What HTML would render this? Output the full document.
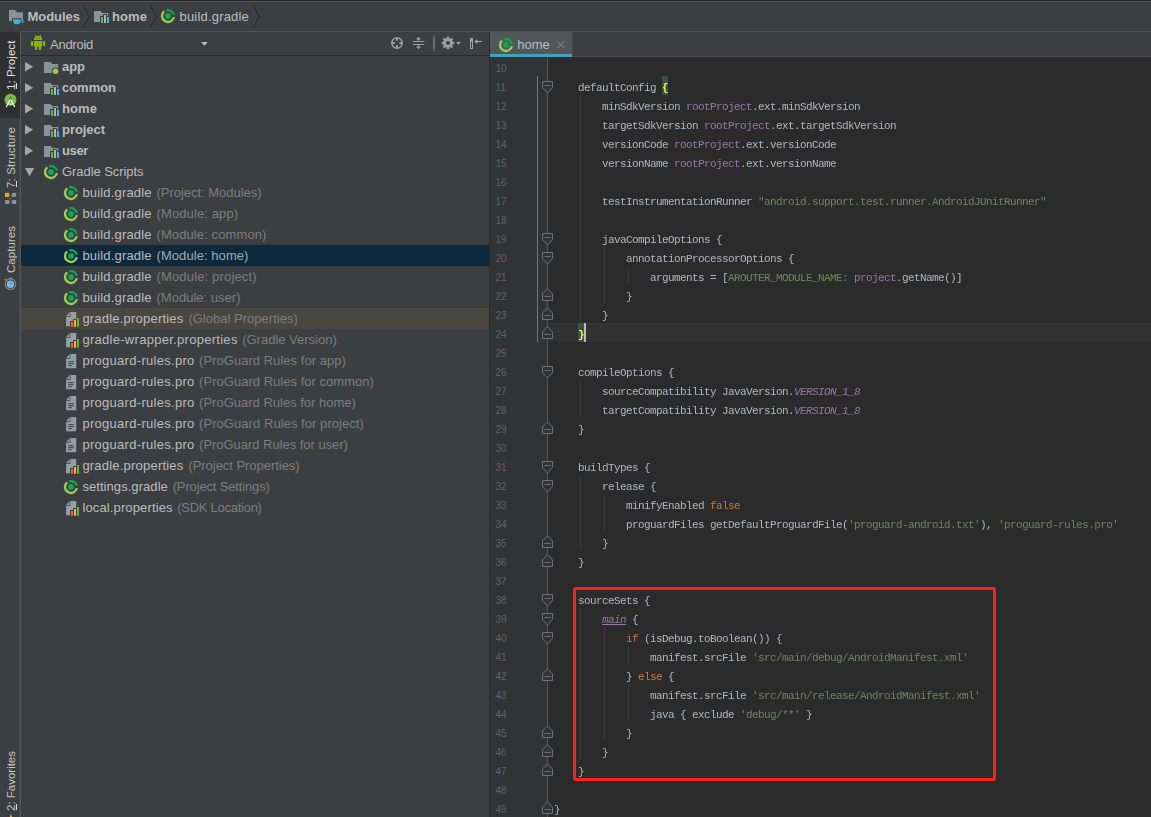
<!DOCTYPE html><html><head><meta charset="utf-8"><title>Modules - build.gradle</title><style>
*{box-sizing:border-box;margin:0;padding:0}
html,body{width:1151px;height:817px;overflow:hidden;background:#3c3f41}
body{position:relative;font-family:"Liberation Sans", "Noto Sans CJK SC", sans-serif;font-size:13px;color:#bbbbbb}
.abs{position:absolute}
svg{position:absolute;overflow:visible}
.t{position:absolute;white-space:pre;line-height:21px;height:21px;font-size:13px;color:#bbbbbb}
.g{color:#7d7d7d}
.b{font-weight:bold}
#crumbs{left:0;top:0;width:1151px;height:31px;background:#3c3f41;border-top:1px solid #242424}
#crumbs3{left:20px;top:31px;width:1131px;height:1px;background:#555555}
#crumbs2{left:0;top:1px;width:1151px;height:1px;background:#555555}
#stripe{left:0;top:32px;width:21px;height:785px;background:#3c3f41;border-right:1px solid #555555}
#stripe2{left:19px;top:118px;width:1px;height:699px;background:#484848}
#stripeSel{left:0;top:31px;width:20px;height:87px;background:linear-gradient(180deg,#404142 0,#2d2f30 2px)}
.vt{position:absolute;white-space:pre;font-size:11.5px;line-height:14px;height:14px;transform-origin:0 0;transform:rotate(-90deg);color:#bbbbbb}
#phead{left:21px;top:32px;width:468px;height:24px;background:#3c3f41;border-bottom:1px solid #2b2b2b}
#tree{left:21px;top:56px;width:468px;height:761px;background:#3c3f41}
.row{position:absolute;left:21px;width:468px;height:21px}
#tabs{left:489px;top:32px;width:662px;height:25px;background:#3c3f41;border-bottom:1px solid #4e4e4e;border-left:1px solid #2b2b2b}
#tabsep{left:572px;top:32px;width:1px;height:25px;background:#4a4a4a}
#tab{left:490px;top:32px;width:82px;height:25px;background:#515658;border-bottom:3px solid #439ec0}
#gutter{left:489px;top:57px;width:59px;height:760px;background:#313335;border-left:1px solid #2b2b2b}
#editor{left:548px;top:57px;width:603px;height:760px;background:#2b2b2b}
.ln{position:absolute;left:495.5px;font-size:10px;line-height:19px;height:19px;color:#606366;white-space:pre}
.cl{will-change:transform;position:absolute;left:554px;font-family:"Liberation Mono", "Noto Sans CJK SC", monospace;font-size:11px;letter-spacing:-0.6px;line-height:19px;height:19px;color:#a9b7c6;white-space:pre}
.k{color:#cc7832}.s{color:#6a8759}.p{color:#9876aa}.pi{color:#9876aa;font-style:italic}
.u{text-decoration:underline}
.bm{color:#ffef28;font-weight:bold}
.ig{position:absolute;width:1px;background:#3a3a3a}
</style></head><body>
<div class="abs" id="crumbs"></div><div class="abs" id="crumbs2"></div><div class="abs" id="crumbs3"></div>
<svg style="left:8px;top:8px" width="16" height="16"><path d="M1 2.1H6.8L8.8 4.2H15V13H1Z" fill="#87939a"/><path d="M4 10.2H13.6V12H16.6V16.5H4Z" fill="#3c3f41"/><path d="M5 11.3H12.6Q12.6 16.2 10 16.2H7.6Q5 16.2 5 11.3Z" fill="#3bb2dd"/><ellipse cx="14" cy="13.4" rx="1.75" ry="1.05" fill="none" stroke="#3bb2dd" stroke-width="0.9"/></svg>
<span class="t b" style="left:27.5px;top:5.5px;letter-spacing:-0.033px;">Modules</span>
<svg style="left:81.8px;top:5px" width="9" height="24"><path d="M-0.5 0.3L5.7 11.5L-0.5 22.7" fill="none" stroke="#4a4c4e" stroke-width="1"/><path d="M0.7 0.3L6.9 11.5L0.7 22.7" fill="none" stroke="#2b2b2b" stroke-width="1.1"/></svg>
<svg style="left:93px;top:8px" width="16" height="16" viewBox="0 0 16 16"><path d="M1 3.1H7.4L9.3 5.1H15.2V14H1Z" fill="#87939a"/><path d="M7 15V8H10V6H14V8H17V15Z" fill="#3c3f41"/><rect x="8" y="9" width="2" height="6" fill="#62b543"/><rect x="11" y="7" width="2" height="8" fill="#aab4ba"/><rect x="14" y="9" width="2" height="6" fill="#40b6e0"/></svg>
<span class="t b" style="left:112px;top:5.5px;letter-spacing:0.082px;">home</span>
<svg style="left:149.2px;top:5px" width="9" height="24"><path d="M-0.5 0.3L5.7 11.5L-0.5 22.7" fill="none" stroke="#4a4c4e" stroke-width="1"/><path d="M0.7 0.3L6.9 11.5L0.7 22.7" fill="none" stroke="#2b2b2b" stroke-width="1.1"/></svg>
<svg style="left:160px;top:8px" width="16" height="16" viewBox="0 0 16 16"><circle cx="8" cy="8" r="2.9" fill="#12a655"/><path d="M6.26 2.31A5.95 5.95 0 0 1 13.82 6.76" fill="none" stroke="#12a655" stroke-width="2.3"/><path d="M13.84 9.14A5.95 5.95 0 1 1 4.26 3.38" fill="none" stroke="#9acd53" stroke-width="2.3"/></svg>
<span class="t" style="left:179.5px;top:5.5px;letter-spacing:0.190px;">build.gradle</span>
<svg style="left:251.5px;top:5px" width="9" height="24"><path d="M-0.5 0.3L5.7 11.5L-0.5 22.7" fill="none" stroke="#4a4c4e" stroke-width="1"/><path d="M0.7 0.3L6.9 11.5L0.7 22.7" fill="none" stroke="#2b2b2b" stroke-width="1.1"/></svg>
<div class="abs" id="stripe"></div><div class="abs" id="stripeSel"></div><div class="abs" id="stripe2"></div>
<span class="vt" style="left:4px;top:90px;letter-spacing:0.092px;color:#e2e2e2">1: Project</span>
<span class="vt" style="left:4px;top:188px;letter-spacing:0.129px;color:#c4c4c4">7: Structure</span>
<span class="vt" style="left:4px;top:273px;letter-spacing:0.041px;color:#c4c4c4">Captures</span>
<span class="vt" style="left:4px;top:810.5px;letter-spacing:-0.007px;color:#c4c4c4">2: Favorites</span>
<div class="abs" id="phead"></div><div class="abs" id="tree"></div>
<span class="t" style="left:50px;top:33.5px;letter-spacing:-0.259px;">Android</span>
<svg style="left:25px;top:62px" width="9" height="10"><path d="M0 0L8.2 4.7L0 9.4Z" fill="#a6a6a6"/></svg>
<svg style="left:43px;top:58.5px" width="16" height="16" viewBox="0 0 16 16"><path d="M1 3.1H7.4L9.3 5.1H15.2V14H1Z" fill="#87939a"/><circle cx="12.5" cy="12.3" r="3.7" fill="#3c3f41"/><circle cx="12.5" cy="12.3" r="2.8" fill="#a4c639"/></svg>
<span class="t b" style="left:62px;top:56px;letter-spacing:-0.042px;">app</span>
<svg style="left:25px;top:83px" width="9" height="10"><path d="M0 0L8.2 4.7L0 9.4Z" fill="#a6a6a6"/></svg>
<svg style="left:43px;top:79.5px" width="16" height="16" viewBox="0 0 16 16"><path d="M1 3.1H7.4L9.3 5.1H15.2V14H1Z" fill="#87939a"/><path d="M7 15V8H10V6H14V8H17V15Z" fill="#3c3f41"/><rect x="8" y="9" width="2" height="6" fill="#62b543"/><rect x="11" y="7" width="2" height="8" fill="#aab4ba"/><rect x="14" y="9" width="2" height="6" fill="#40b6e0"/></svg>
<span class="t b" style="left:62px;top:77px;letter-spacing:-0.029px;">common</span>
<svg style="left:25px;top:104px" width="9" height="10"><path d="M0 0L8.2 4.7L0 9.4Z" fill="#a6a6a6"/></svg>
<svg style="left:43px;top:100.5px" width="16" height="16" viewBox="0 0 16 16"><path d="M1 3.1H7.4L9.3 5.1H15.2V14H1Z" fill="#87939a"/><path d="M7 15V8H10V6H14V8H17V15Z" fill="#3c3f41"/><rect x="8" y="9" width="2" height="6" fill="#62b543"/><rect x="11" y="7" width="2" height="8" fill="#aab4ba"/><rect x="14" y="9" width="2" height="6" fill="#40b6e0"/></svg>
<span class="t b" style="left:62px;top:98px;letter-spacing:0.082px;">home</span>
<svg style="left:25px;top:125px" width="9" height="10"><path d="M0 0L8.2 4.7L0 9.4Z" fill="#a6a6a6"/></svg>
<svg style="left:43px;top:121.5px" width="16" height="16" viewBox="0 0 16 16"><path d="M1 3.1H7.4L9.3 5.1H15.2V14H1Z" fill="#87939a"/><path d="M7 15V8H10V6H14V8H17V15Z" fill="#3c3f41"/><rect x="8" y="9" width="2" height="6" fill="#62b543"/><rect x="11" y="7" width="2" height="8" fill="#aab4ba"/><rect x="14" y="9" width="2" height="6" fill="#40b6e0"/></svg>
<span class="t b" style="left:62px;top:119px;letter-spacing:-0.049px;">project</span>
<svg style="left:25px;top:146px" width="9" height="10"><path d="M0 0L8.2 4.7L0 9.4Z" fill="#a6a6a6"/></svg>
<svg style="left:43px;top:142.5px" width="16" height="16" viewBox="0 0 16 16"><path d="M1 3.1H7.4L9.3 5.1H15.2V14H1Z" fill="#87939a"/><path d="M7 15V8H10V6H14V8H17V15Z" fill="#3c3f41"/><rect x="8" y="9" width="2" height="6" fill="#62b543"/><rect x="11" y="7" width="2" height="8" fill="#aab4ba"/><rect x="14" y="9" width="2" height="6" fill="#40b6e0"/></svg>
<span class="t b" style="left:62px;top:140px;letter-spacing:-0.367px;">user</span>
<svg style="left:24.5px;top:168px" width="10" height="9"><path d="M0 0H9.2L4.6 8.2Z" fill="#a6a6a6"/></svg>
<svg style="left:43px;top:163.5px" width="16" height="16" viewBox="0 0 16 16"><circle cx="8" cy="8" r="2.9" fill="#12a655"/><path d="M6.26 2.31A5.95 5.95 0 0 1 13.82 6.76" fill="none" stroke="#12a655" stroke-width="2.3"/><path d="M13.84 9.14A5.95 5.95 0 1 1 4.26 3.38" fill="none" stroke="#9acd53" stroke-width="2.3"/></svg>
<span class="t" style="left:62px;top:161px;letter-spacing:-0.062px;">Gradle Scripts</span>
<svg style="left:63px;top:184.5px" width="16" height="16" viewBox="0 0 16 16"><circle cx="8" cy="8" r="2.9" fill="#12a655"/><path d="M6.26 2.31A5.95 5.95 0 0 1 13.82 6.76" fill="none" stroke="#12a655" stroke-width="2.3"/><path d="M13.84 9.14A5.95 5.95 0 1 1 4.26 3.38" fill="none" stroke="#9acd53" stroke-width="2.3"/></svg>
<span class="t" style="left:82.4px;top:182px;letter-spacing:0.178px;">build.gradle</span>
<span class="t g" style="left:156.5px;top:182px;letter-spacing:-0.027px;">(Project: Modules)</span>
<svg style="left:63px;top:205.5px" width="16" height="16" viewBox="0 0 16 16"><circle cx="8" cy="8" r="2.9" fill="#12a655"/><path d="M6.26 2.31A5.95 5.95 0 0 1 13.82 6.76" fill="none" stroke="#12a655" stroke-width="2.3"/><path d="M13.84 9.14A5.95 5.95 0 1 1 4.26 3.38" fill="none" stroke="#9acd53" stroke-width="2.3"/></svg>
<span class="t" style="left:82.4px;top:203px;letter-spacing:0.178px;">build.gradle</span>
<span class="t g" style="left:156.5px;top:203px;letter-spacing:0.114px;">(Module: app)</span>
<svg style="left:63px;top:226.5px" width="16" height="16" viewBox="0 0 16 16"><circle cx="8" cy="8" r="2.9" fill="#12a655"/><path d="M6.26 2.31A5.95 5.95 0 0 1 13.82 6.76" fill="none" stroke="#12a655" stroke-width="2.3"/><path d="M13.84 9.14A5.95 5.95 0 1 1 4.26 3.38" fill="none" stroke="#9acd53" stroke-width="2.3"/></svg>
<span class="t" style="left:82.4px;top:224px;letter-spacing:0.178px;">build.gradle</span>
<span class="t g" style="left:156.5px;top:224px;letter-spacing:0.102px;">(Module: common)</span>
<div class="row" style="top:245px;background:#0d293e"></div>
<svg style="left:63px;top:247.5px" width="16" height="16" viewBox="0 0 16 16"><circle cx="8" cy="8" r="2.9" fill="#12a655"/><path d="M6.26 2.31A5.95 5.95 0 0 1 13.82 6.76" fill="none" stroke="#12a655" stroke-width="2.3"/><path d="M13.84 9.14A5.95 5.95 0 1 1 4.26 3.38" fill="none" stroke="#9acd53" stroke-width="2.3"/></svg>
<span class="t" style="left:82.4px;top:245px;letter-spacing:0.178px;">build.gradle</span>
<span class="t g" style="left:156.5px;top:245px;letter-spacing:0.068px;color:#a3a7aa;">(Module: home)</span>
<svg style="left:63px;top:268.5px" width="16" height="16" viewBox="0 0 16 16"><circle cx="8" cy="8" r="2.9" fill="#12a655"/><path d="M6.26 2.31A5.95 5.95 0 0 1 13.82 6.76" fill="none" stroke="#12a655" stroke-width="2.3"/><path d="M13.84 9.14A5.95 5.95 0 1 1 4.26 3.38" fill="none" stroke="#9acd53" stroke-width="2.3"/></svg>
<span class="t" style="left:82.4px;top:266px;letter-spacing:0.178px;">build.gradle</span>
<span class="t g" style="left:156.5px;top:266px;letter-spacing:0.159px;">(Module: project)</span>
<svg style="left:63px;top:289.5px" width="16" height="16" viewBox="0 0 16 16"><circle cx="8" cy="8" r="2.9" fill="#12a655"/><path d="M6.26 2.31A5.95 5.95 0 0 1 13.82 6.76" fill="none" stroke="#12a655" stroke-width="2.3"/><path d="M13.84 9.14A5.95 5.95 0 1 1 4.26 3.38" fill="none" stroke="#9acd53" stroke-width="2.3"/></svg>
<span class="t" style="left:82.4px;top:287px;letter-spacing:0.178px;">build.gradle</span>
<span class="t g" style="left:156.5px;top:287px;letter-spacing:0.013px;">(Module: user)</span>
<div class="row" style="top:308px;background:#4a4741"></div>
<svg style="left:65px;top:311px" width="16" height="16" viewBox="0 0 16 16"><path d="M1.1 5.3L4.7 1.1V5.3Z" fill="#939fa7"/><path d="M5.4 1H11.2V8H8V10H5V15.2H1.1V6H5.4Z" fill="#939fa7"/><rect x="6" y="11" width="2" height="4.8" fill="#f26522"/><rect x="9" y="9" width="2" height="6.8" fill="#fbb03b"/><rect x="12" y="7" width="2" height="8.8" fill="#62b543"/></svg>
<span class="t" style="left:82.4px;top:308px;letter-spacing:0.208px;">gradle.properties</span>
<span class="t g" style="left:188.4px;top:308px;letter-spacing:0.015px;">(Global Properties)</span>
<svg style="left:65px;top:332px" width="16" height="16" viewBox="0 0 16 16"><path d="M1.1 5.3L4.7 1.1V5.3Z" fill="#939fa7"/><path d="M5.4 1H11.2V8H8V10H5V15.2H1.1V6H5.4Z" fill="#939fa7"/><rect x="6" y="11" width="2" height="4.8" fill="#f26522"/><rect x="9" y="9" width="2" height="6.8" fill="#fbb03b"/><rect x="12" y="7" width="2" height="8.8" fill="#62b543"/></svg>
<span class="t" style="left:82.4px;top:329px;letter-spacing:0.286px;">gradle-wrapper.properties</span>
<span class="t g" style="left:242.2px;top:329px;letter-spacing:-0.004px;">(Gradle Version)</span>
<svg style="left:65px;top:353px" width="16" height="16" viewBox="0 0 16 16"><path d="M1.1 5.3L4.7 1.1V5.3Z" fill="#939fa7"/><path d="M5.4 1H11.2V15.2H1.1V6H5.4Z" fill="#939fa7"/><path d="M3.2 8.7H8.9M3.2 10.7H8.9M3.2 12.7H6.8" stroke="#3c3f41" stroke-width="1" fill="none"/></svg>
<span class="t" style="left:82.4px;top:350px;letter-spacing:0.291px;">proguard-rules.pro</span>
<span class="t g" style="left:199.1px;top:350px;letter-spacing:0.031px;">(ProGuard Rules for app)</span>
<svg style="left:65px;top:374px" width="16" height="16" viewBox="0 0 16 16"><path d="M1.1 5.3L4.7 1.1V5.3Z" fill="#939fa7"/><path d="M5.4 1H11.2V15.2H1.1V6H5.4Z" fill="#939fa7"/><path d="M3.2 8.7H8.9M3.2 10.7H8.9M3.2 12.7H6.8" stroke="#3c3f41" stroke-width="1" fill="none"/></svg>
<span class="t" style="left:82.4px;top:371px;letter-spacing:0.291px;">proguard-rules.pro</span>
<span class="t g" style="left:199.1px;top:371px;letter-spacing:0.025px;">(ProGuard Rules for common)</span>
<svg style="left:65px;top:395px" width="16" height="16" viewBox="0 0 16 16"><path d="M1.1 5.3L4.7 1.1V5.3Z" fill="#939fa7"/><path d="M5.4 1H11.2V15.2H1.1V6H5.4Z" fill="#939fa7"/><path d="M3.2 8.7H8.9M3.2 10.7H8.9M3.2 12.7H6.8" stroke="#3c3f41" stroke-width="1" fill="none"/></svg>
<span class="t" style="left:82.4px;top:392px;letter-spacing:0.291px;">proguard-rules.pro</span>
<span class="t g" style="left:199.1px;top:392px;letter-spacing:0.001px;">(ProGuard Rules for home)</span>
<svg style="left:65px;top:416px" width="16" height="16" viewBox="0 0 16 16"><path d="M1.1 5.3L4.7 1.1V5.3Z" fill="#939fa7"/><path d="M5.4 1H11.2V15.2H1.1V6H5.4Z" fill="#939fa7"/><path d="M3.2 8.7H8.9M3.2 10.7H8.9M3.2 12.7H6.8" stroke="#3c3f41" stroke-width="1" fill="none"/></svg>
<span class="t" style="left:82.4px;top:413px;letter-spacing:0.291px;">proguard-rules.pro</span>
<span class="t g" style="left:199.1px;top:413px;letter-spacing:0.054px;">(ProGuard Rules for project)</span>
<svg style="left:65px;top:437px" width="16" height="16" viewBox="0 0 16 16"><path d="M1.1 5.3L4.7 1.1V5.3Z" fill="#939fa7"/><path d="M5.4 1H11.2V15.2H1.1V6H5.4Z" fill="#939fa7"/><path d="M3.2 8.7H8.9M3.2 10.7H8.9M3.2 12.7H6.8" stroke="#3c3f41" stroke-width="1" fill="none"/></svg>
<span class="t" style="left:82.4px;top:434px;letter-spacing:0.291px;">proguard-rules.pro</span>
<span class="t g" style="left:199.1px;top:434px;letter-spacing:-0.031px;">(ProGuard Rules for user)</span>
<svg style="left:65px;top:458px" width="16" height="16" viewBox="0 0 16 16"><path d="M1.1 5.3L4.7 1.1V5.3Z" fill="#939fa7"/><path d="M5.4 1H11.2V8H8V10H5V15.2H1.1V6H5.4Z" fill="#939fa7"/><rect x="6" y="11" width="2" height="4.8" fill="#f26522"/><rect x="9" y="9" width="2" height="6.8" fill="#fbb03b"/><rect x="12" y="7" width="2" height="8.8" fill="#62b543"/></svg>
<span class="t" style="left:82.4px;top:455px;letter-spacing:0.208px;">gradle.properties</span>
<span class="t g" style="left:188.4px;top:455px;letter-spacing:-0.039px;">(Project Properties)</span>
<svg style="left:63px;top:478.5px" width="16" height="16" viewBox="0 0 16 16"><circle cx="8" cy="8" r="2.9" fill="#12a655"/><path d="M6.26 2.31A5.95 5.95 0 0 1 13.82 6.76" fill="none" stroke="#12a655" stroke-width="2.3"/><path d="M13.84 9.14A5.95 5.95 0 1 1 4.26 3.38" fill="none" stroke="#9acd53" stroke-width="2.3"/></svg>
<span class="t" style="left:82.4px;top:476px;letter-spacing:0.062px;">settings.gradle</span>
<span class="t g" style="left:172.7px;top:476px;letter-spacing:-0.150px;">(Project Settings)</span>
<svg style="left:65px;top:500px" width="16" height="16" viewBox="0 0 16 16"><path d="M1.1 5.3L4.7 1.1V5.3Z" fill="#939fa7"/><path d="M5.4 1H11.2V8H8V10H5V15.2H1.1V6H5.4Z" fill="#939fa7"/><rect x="6" y="11" width="2" height="4.8" fill="#f26522"/><rect x="9" y="9" width="2" height="6.8" fill="#fbb03b"/><rect x="12" y="7" width="2" height="8.8" fill="#62b543"/></svg>
<span class="t" style="left:82.4px;top:497px;letter-spacing:0.134px;">local.properties</span>
<span class="t g" style="left:177.2px;top:497px;letter-spacing:-0.261px;">(SDK Location)</span>
<div class="abs" id="tabs"></div><div class="abs" id="tab"></div><div class="abs" id="tabsep"></div>
<svg style="left:498px;top:37px" width="16" height="16" viewBox="0 0 16 16"><circle cx="8" cy="8" r="2.9" fill="#12a655"/><path d="M6.26 2.31A5.95 5.95 0 0 1 13.82 6.76" fill="none" stroke="#12a655" stroke-width="2.3"/><path d="M13.84 9.14A5.95 5.95 0 1 1 4.26 3.38" fill="none" stroke="#9acd53" stroke-width="2.3"/></svg>
<span class="t" style="left:517.3px;top:34px;letter-spacing:-0.008px;">home</span>
<svg style="left:557px;top:41px" width="8" height="8"><path d="M0.5 0.5L7 7M7 0.5L0.5 7" stroke="#8f9395" stroke-width="1" fill="none"/></svg>
<div class="abs" id="gutter"></div><div class="abs" id="editor"></div>
<div class="abs" style="left:548px;top:323px;width:603px;height:19px;background:#323232"></div>
<div class="abs" style="left:662px;top:76px;width:6px;height:19px;background:#3b514d"></div>
<div class="abs" style="left:578px;top:323px;width:6px;height:19px;background:#3b514d"></div>
<div class="abs" style="left:537px;top:76px;width:1px;height:266px;background:#4f8a83"></div>
<div class="abs" style="left:547px;top:57px;width:1px;height:760px;background:#555555"></div>
<div class="ig" style="left:580px;top:95px;height:228px"></div>
<div class="ig" style="left:580px;top:380px;height:38px"></div>
<div class="ig" style="left:580px;top:475px;height:76px"></div>
<div class="ig" style="left:580px;top:608px;height:152px"></div>
<div class="ig" style="left:604px;top:247px;height:57px"></div>
<div class="ig" style="left:604px;top:494px;height:38px"></div>
<div class="ig" style="left:604px;top:627px;height:114px"></div>
<div class="ig" style="left:628px;top:266px;height:19px"></div>
<div class="ig" style="left:628px;top:646px;height:19px"></div>
<div class="ig" style="left:628px;top:684px;height:38px"></div>
<span class="ln" style="top:59px">10</span>
<span class="ln" style="top:78px">11</span>
<span class="cl" style="top:79px">    defaultConfig <span class="bm">{</span></span>
<span class="ln" style="top:97px">12</span>
<span class="cl" style="top:98px">        minSdkVersion <span class="p">rootProject</span>.ext.minSdkVersion</span>
<span class="ln" style="top:116px">13</span>
<span class="cl" style="top:117px">        targetSdkVersion <span class="p">rootProject</span>.ext.targetSdkVersion</span>
<span class="ln" style="top:135px">14</span>
<span class="cl" style="top:136px">        versionCode <span class="p">rootProject</span>.ext.versionCode</span>
<span class="ln" style="top:154px">15</span>
<span class="cl" style="top:155px">        versionName <span class="p">rootProject</span>.ext.versionName</span>
<span class="ln" style="top:173px">16</span>
<span class="ln" style="top:192px">17</span>
<span class="cl" style="top:193px">        testInstrumentationRunner <span class="s">"android.support.test.runner.AndroidJUnitRunner"</span></span>
<span class="ln" style="top:211px">18</span>
<span class="ln" style="top:230px">19</span>
<span class="cl" style="top:231px">        javaCompileOptions {</span>
<span class="ln" style="top:249px">20</span>
<span class="cl" style="top:250px">            annotationProcessorOptions {</span>
<span class="ln" style="top:268px">21</span>
<span class="cl" style="top:269px">                arguments = [<span class="s">AROUTER_MODULE_NAME:</span> <span class="p">project</span>.getName()]</span>
<span class="ln" style="top:287px">22</span>
<span class="cl" style="top:288px">            }</span>
<span class="ln" style="top:306px">23</span>
<span class="cl" style="top:307px">        }</span>
<span class="ln" style="top:325px">24</span>
<span class="cl" style="top:326px">    <span class="bm">}</span></span>
<span class="ln" style="top:344px">25</span>
<span class="ln" style="top:363px">26</span>
<span class="cl" style="top:364px">    compileOptions {</span>
<span class="ln" style="top:382px">27</span>
<span class="cl" style="top:383px">        sourceCompatibility JavaVersion.<span class="pi">VERSION_1_8</span></span>
<span class="ln" style="top:401px">28</span>
<span class="cl" style="top:402px">        targetCompatibility JavaVersion.<span class="pi">VERSION_1_8</span></span>
<span class="ln" style="top:420px">29</span>
<span class="cl" style="top:421px">    }</span>
<span class="ln" style="top:439px">30</span>
<span class="ln" style="top:458px">31</span>
<span class="cl" style="top:459px">    buildTypes {</span>
<span class="ln" style="top:477px">32</span>
<span class="cl" style="top:478px">        release {</span>
<span class="ln" style="top:496px">33</span>
<span class="cl" style="top:497px">            minifyEnabled <span class="k">false</span></span>
<span class="ln" style="top:515px">34</span>
<span class="cl" style="top:516px">            proguardFiles getDefaultProguardFile(<span class="s">'proguard-android.txt'</span>), <span class="s">'proguard-rules.pro'</span></span>
<span class="ln" style="top:534px">35</span>
<span class="cl" style="top:535px">        }</span>
<span class="ln" style="top:553px">36</span>
<span class="cl" style="top:554px">    }</span>
<span class="ln" style="top:572px">37</span>
<span class="ln" style="top:591px">38</span>
<span class="cl" style="top:592px">    sourceSets {</span>
<span class="ln" style="top:610px">39</span>
<span class="cl" style="top:611px">        <span class="pi u">main</span> {</span>
<span class="ln" style="top:629px">40</span>
<span class="cl" style="top:630px">            <span class="k">if</span> (isDebug.toBoolean()) {</span>
<span class="ln" style="top:648px">41</span>
<span class="cl" style="top:649px">                manifest.srcFile <span class="s">'src/main/debug/AndroidManifest.xml'</span></span>
<span class="ln" style="top:667px">42</span>
<span class="cl" style="top:668px">            } <span class="k">else</span> {</span>
<span class="ln" style="top:686px">43</span>
<span class="cl" style="top:687px">                manifest.srcFile <span class="s">'src/main/release/AndroidManifest.xml'</span></span>
<span class="ln" style="top:705px">44</span>
<span class="cl" style="top:706px">                java { exclude <span class="s">'debug/**'</span> }</span>
<span class="ln" style="top:724px">45</span>
<span class="cl" style="top:725px">            }</span>
<span class="ln" style="top:743px">46</span>
<span class="cl" style="top:744px">        }</span>
<span class="ln" style="top:762px">47</span>
<span class="cl" style="top:763px">    }</span>
<span class="ln" style="top:781px">48</span>
<span class="ln" style="top:800px">49</span>
<span class="cl" style="top:801px">}</span>
<div class="abs" style="left:584px;top:323px;width:2px;height:19px;background:#bbbbbb"></div>
<svg style="left:542px;top:81px" width="11" height="13"><path d="M0.5 0.5H10.5V6.5L5.5 12L0.5 6.5Z" fill="#313335" stroke="#6e7173" stroke-width="1"/><path d="M2.5 4.5H8.5" stroke="#6e7173" stroke-width="1"/></svg>
<svg style="left:542px;top:233px" width="11" height="13"><path d="M0.5 0.5H10.5V6.5L5.5 12L0.5 6.5Z" fill="#313335" stroke="#6e7173" stroke-width="1"/><path d="M2.5 4.5H8.5" stroke="#6e7173" stroke-width="1"/></svg>
<svg style="left:542px;top:252px" width="11" height="13"><path d="M0.5 0.5H10.5V6.5L5.5 12L0.5 6.5Z" fill="#313335" stroke="#6e7173" stroke-width="1"/><path d="M2.5 4.5H8.5" stroke="#6e7173" stroke-width="1"/></svg>
<svg style="left:542px;top:366px" width="11" height="13"><path d="M0.5 0.5H10.5V6.5L5.5 12L0.5 6.5Z" fill="#313335" stroke="#6e7173" stroke-width="1"/><path d="M2.5 4.5H8.5" stroke="#6e7173" stroke-width="1"/></svg>
<svg style="left:542px;top:461px" width="11" height="13"><path d="M0.5 0.5H10.5V6.5L5.5 12L0.5 6.5Z" fill="#313335" stroke="#6e7173" stroke-width="1"/><path d="M2.5 4.5H8.5" stroke="#6e7173" stroke-width="1"/></svg>
<svg style="left:542px;top:480px" width="11" height="13"><path d="M0.5 0.5H10.5V6.5L5.5 12L0.5 6.5Z" fill="#313335" stroke="#6e7173" stroke-width="1"/><path d="M2.5 4.5H8.5" stroke="#6e7173" stroke-width="1"/></svg>
<svg style="left:542px;top:594px" width="11" height="13"><path d="M0.5 0.5H10.5V6.5L5.5 12L0.5 6.5Z" fill="#313335" stroke="#6e7173" stroke-width="1"/><path d="M2.5 4.5H8.5" stroke="#6e7173" stroke-width="1"/></svg>
<svg style="left:542px;top:613px" width="11" height="13"><path d="M0.5 0.5H10.5V6.5L5.5 12L0.5 6.5Z" fill="#313335" stroke="#6e7173" stroke-width="1"/><path d="M2.5 4.5H8.5" stroke="#6e7173" stroke-width="1"/></svg>
<svg style="left:542px;top:632px" width="11" height="13"><path d="M0.5 0.5H10.5V6.5L5.5 12L0.5 6.5Z" fill="#313335" stroke="#6e7173" stroke-width="1"/><path d="M2.5 4.5H8.5" stroke="#6e7173" stroke-width="1"/></svg>
<svg style="left:542px;top:288px" width="11" height="13"><path d="M0.5 12.5H10.5V6L5.5 0.7L0.5 6Z" fill="#313335" stroke="#6e7173" stroke-width="1"/><path d="M2.5 8.5H8.5" stroke="#6e7173" stroke-width="1"/></svg>
<svg style="left:542px;top:307px" width="11" height="13"><path d="M0.5 12.5H10.5V6L5.5 0.7L0.5 6Z" fill="#313335" stroke="#6e7173" stroke-width="1"/><path d="M2.5 8.5H8.5" stroke="#6e7173" stroke-width="1"/></svg>
<svg style="left:542px;top:326px" width="11" height="13"><path d="M0.5 12.5H10.5V6L5.5 0.7L0.5 6Z" fill="#313335" stroke="#6e7173" stroke-width="1"/><path d="M2.5 8.5H8.5" stroke="#6e7173" stroke-width="1"/></svg>
<svg style="left:542px;top:421px" width="11" height="13"><path d="M0.5 12.5H10.5V6L5.5 0.7L0.5 6Z" fill="#313335" stroke="#6e7173" stroke-width="1"/><path d="M2.5 8.5H8.5" stroke="#6e7173" stroke-width="1"/></svg>
<svg style="left:542px;top:535px" width="11" height="13"><path d="M0.5 12.5H10.5V6L5.5 0.7L0.5 6Z" fill="#313335" stroke="#6e7173" stroke-width="1"/><path d="M2.5 8.5H8.5" stroke="#6e7173" stroke-width="1"/></svg>
<svg style="left:542px;top:554px" width="11" height="13"><path d="M0.5 12.5H10.5V6L5.5 0.7L0.5 6Z" fill="#313335" stroke="#6e7173" stroke-width="1"/><path d="M2.5 8.5H8.5" stroke="#6e7173" stroke-width="1"/></svg>
<svg style="left:542px;top:668px" width="11" height="13"><path d="M0.5 12.5H10.5V6L5.5 0.7L0.5 6Z" fill="#313335" stroke="#6e7173" stroke-width="1"/><path d="M2.5 8.5H8.5" stroke="#6e7173" stroke-width="1"/></svg>
<svg style="left:542px;top:725px" width="11" height="13"><path d="M0.5 12.5H10.5V6L5.5 0.7L0.5 6Z" fill="#313335" stroke="#6e7173" stroke-width="1"/><path d="M2.5 8.5H8.5" stroke="#6e7173" stroke-width="1"/></svg>
<svg style="left:542px;top:744px" width="11" height="13"><path d="M0.5 12.5H10.5V6L5.5 0.7L0.5 6Z" fill="#313335" stroke="#6e7173" stroke-width="1"/><path d="M2.5 8.5H8.5" stroke="#6e7173" stroke-width="1"/></svg>
<svg style="left:542px;top:763px" width="11" height="13"><path d="M0.5 12.5H10.5V6L5.5 0.7L0.5 6Z" fill="#313335" stroke="#6e7173" stroke-width="1"/><path d="M2.5 8.5H8.5" stroke="#6e7173" stroke-width="1"/></svg>
<svg style="left:542px;top:801px" width="11" height="13"><path d="M0.5 12.5H10.5V6L5.5 0.7L0.5 6Z" fill="#313335" stroke="#6e7173" stroke-width="1"/><path d="M2.5 8.5H8.5" stroke="#6e7173" stroke-width="1"/></svg>
<div class="abs" style="left:573px;top:587px;width:423px;height:194px;border:3px solid #fd2014;border-radius:3px"></div>
<svg style="left:30px;top:34px" width="16" height="17"><g fill="#86b510"><path d="M3.9 5.9A4.1 4.1 0 0 1 12.1 5.9Z"/><path d="M5.2 1L6.3 3M10.8 1L9.7 3" stroke="#86b510" stroke-width="0.9" fill="none"/><path d="M3.9 7H12.1V12Q12.1 12.8 11.3 12.8H4.7Q3.9 12.8 3.9 12Z"/><rect x="5.1" y="12" width="2.1" height="4.1" rx="0.9"/><rect x="8.9" y="12" width="2.1" height="4.1" rx="0.9"/><rect x="0.8" y="6.9" width="2.3" height="5.3" rx="1.1"/><rect x="12.9" y="6.9" width="2.3" height="5.3" rx="1.1"/></g><circle cx="6.3" cy="4.1" r="0.55" fill="#3c3f41"/><circle cx="9.7" cy="4.1" r="0.55" fill="#3c3f41"/></svg>
<svg style="left:201px;top:42px" width="8" height="5"><path d="M0.3 0H6.7L3.5 3.7Z" fill="#c0c0c0"/></svg>
<svg style="left:390px;top:36px" width="14" height="14"><g fill="none" stroke="#9da0a2"><circle cx="7" cy="7" r="5.2" stroke-width="1.5"/><path d="M7 1.5V4.7M7 9.3V12.5M1.5 7H4.7M9.3 7H12.5" stroke-width="2"/></g></svg>
<svg style="left:412px;top:36px" width="13" height="14"><g fill="none" stroke="#9da0a2" stroke-width="1"><path d="M0.8 5.5H12.2M0.8 8.5H12.2"/><path d="M6.5 0.8V4.5M6.5 13.2V9.5"/></g><path d="M4 2.2H9L6.5 4.8Z M4 11.8H9L6.5 9.2Z" fill="#9da0a2"/></svg>
<div class="abs" style="left:433px;top:35px;width:2px;height:17px;background:linear-gradient(180deg,rgba(110,110,110,0.2),#6e6e6e 25%,#6e6e6e 75%,rgba(110,110,110,0.2))"></div>
<svg style="left:441px;top:36px" width="14" height="14"><g transform="translate(7,7)"><g fill="#9da0a2"><rect x="-1.3" y="-6.2" width="2.6" height="3.4" transform="rotate(0)"/><rect x="-1.3" y="-6.2" width="2.6" height="3.4" transform="rotate(45)"/><rect x="-1.3" y="-6.2" width="2.6" height="3.4" transform="rotate(90)"/><rect x="-1.3" y="-6.2" width="2.6" height="3.4" transform="rotate(135)"/><rect x="-1.3" y="-6.2" width="2.6" height="3.4" transform="rotate(180)"/><rect x="-1.3" y="-6.2" width="2.6" height="3.4" transform="rotate(225)"/><rect x="-1.3" y="-6.2" width="2.6" height="3.4" transform="rotate(270)"/><rect x="-1.3" y="-6.2" width="2.6" height="3.4" transform="rotate(315)"/></g><circle r="3.3" fill="none" stroke="#9da0a2" stroke-width="2.6"/></g></svg>
<svg style="left:456px;top:42px" width="6" height="4"><path d="M0 0H5L2.5 2.8Z" fill="#9da0a2"/></svg>
<svg style="left:469px;top:37px" width="14" height="13"><rect x="1" y="1" width="3" height="4" fill="#9da0a2"/><rect x="1.5" y="1.5" width="2" height="10" fill="none" stroke="#9da0a2" stroke-width="1"/><path d="M6 4.5H13" stroke="#9da0a2" stroke-width="1" fill="none"/><path d="M5.3 4.5L8.3 2V7Z" fill="#9da0a2"/></svg>
<svg style="left:4px;top:93px" width="13" height="15"><circle cx="6.5" cy="6.8" r="6" fill="#79be40"/><path d="M6.5 2.6L7.8 5.2V8L6.5 9L5.2 8V5.2Z" fill="#6d7072"/><path d="M6.3 6.5L2.2 14M6.7 6.5L10.8 14" stroke="#f2f2f2" stroke-width="1.3" fill="none"/><path d="M3.9 10.6Q6.5 12.2 9.1 10.6" stroke="#e8e8e8" stroke-width="1" fill="none"/></svg>
<svg style="left:4px;top:192px" width="13" height="13"><path d="M3 3L10 3L3 10H10" stroke="#6f7a80" stroke-width="0.8" fill="none"/><rect x="1" y="0.8" width="4.2" height="4.2" fill="#e8a317"/><rect x="8" y="0.8" width="4.2" height="4.2" fill="#87939a"/><rect x="1" y="8" width="4.2" height="4" fill="#87939a"/><rect x="8" y="8" width="4.2" height="4" fill="#87939a"/></svg>
<svg style="left:3px;top:276px" width="15" height="15"><circle cx="7.5" cy="8.2" r="5.3" fill="none" stroke="#8c8c8c" stroke-width="1.1"/><circle cx="7.5" cy="8.2" r="3.7" fill="#6ebff0"/><path d="M7.5 1V3M2 3L3.8 4.8" stroke="#8c8c8c" stroke-width="1.4" fill="none"/><path d="M7.3 8.4L9 6.6" stroke="#555" stroke-width="1" fill="none"/></svg>
<svg style="left:5px;top:813px" width="12" height="6"><path d="M6 0.8L8 6H4Z" fill="#f0a732"/></svg>
<div class="abs" style="left:16px;top:83px;width:1px;height:6px;background:#dddddd"></div>
<div class="abs" style="left:16px;top:181px;width:1px;height:6px;background:#dddddd"></div>
<div class="abs" style="left:16px;top:804px;width:1px;height:6px;background:#dddddd"></div>
</body></html>
